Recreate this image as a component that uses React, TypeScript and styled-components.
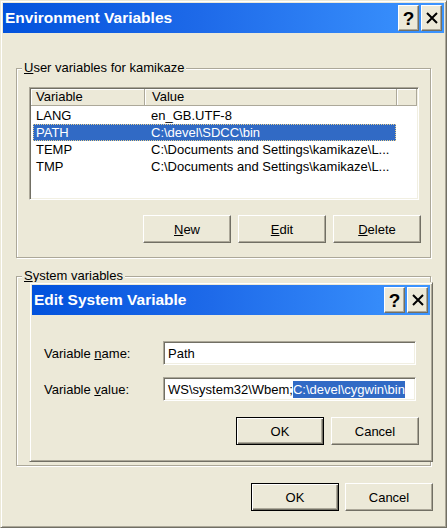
import React from "react";
import styled, { createGlobalStyle, css } from "styled-components";

const GlobalStyle = createGlobalStyle`
  html, body { margin: 0; padding: 0; background: #ece9d8; }
  body { font-family: "Liberation Sans", Arial, sans-serif; font-size: 13px; color: #000; }
  * { box-sizing: border-box; }
`;

const windowFrame = css`
  background: #ece9d8;
  border: 1px solid;
  border-color: #ece9d8 #716f64 #716f64 #ece9d8;
  box-shadow: inset 1px 1px 0 #fff, inset -1px -1px 0 #aca899;
  padding: 2px;
  display: flex;
  flex-direction: column;
`;

const raised = css`
  background: #ece9d8;
  border: 1px solid;
  border-color: #fff #716f64 #716f64 #fff;
  box-shadow: inset -1px -1px 0 #aca899;
`;

const sunken = css`
  background: #fff;
  border: 1px solid;
  border-color: #aca899 #fff #fff #aca899;
  box-shadow: inset 1px 1px 0 #716f64, inset -1px -1px 0 #f1efe2;
`;

const Window = styled.div`
  ${windowFrame}
  position: relative;
  width: 447px;
  height: 528px;
`;

const Dialog = styled.div`
  ${windowFrame}
  position: absolute;
  left: 12px;
  top: 5px;
  width: 404px;
  height: 180px;
  z-index: 2;
`;

const TitleBar = styled.div`
  height: 30px;
  flex: none;
  display: flex;
  align-items: center;
  padding: 0 2px 0 2px;
  background: linear-gradient(to right, #0252dc 0%, #1e6ae9 45%, #3c95ff 100%);
`;

const TitleText = styled.div`
  flex: 1;
  color: #fff;
  font-family: "Liberation Sans", Arial, sans-serif;
  font-weight: bold;
  font-size: 15.5px;
  white-space: nowrap;
`;

const CaptionButtons = styled.div`
  display: flex;
  gap: 2px;
`;

const CaptionButton = styled.div`
  ${raised}
  width: 21px;
  height: 26px;
  display: flex;
  align-items: center;
  justify-content: center;
`;

const HelpGlyph = styled.span`
  font-family: "Liberation Sans", Arial, sans-serif;
  font-weight: bold;
  font-size: 19px;
  line-height: 1;
  color: #000;
  margin-top: 1px;
`;

const WindowBody = styled.div`
  display: flex;
  flex-direction: column;
  padding: 35px 11px 0 13px;
`;

const GroupBox = styled.div<{ $mt?: number }>`
  position: relative;
  width: 415px;
  height: 190px;
  margin-top: ${(p) => p.$mt ?? 0}px;
  border: 1px solid #aca899;
  box-shadow: inset 1px 1px 0 #fff, 1px 1px 0 #fff;
  display: flex;
  flex-direction: column;
  padding: 18px 9px 0 12px;
`;

const GroupLabel = styled.span`
  position: absolute;
  top: -9px;
  left: 5px;
  padding: 0 2px;
  line-height: 15px;
  background: #ece9d8;
  white-space: nowrap;
`;

const ListView = styled.div`
  ${sunken}
  width: 390px;
  height: 113px;
  padding: 1px;
  overflow: hidden;
`;

const ListHeader = styled.div`
  display: flex;
  height: 17px;
`;

const HeaderCell = styled.div<{ $w?: number; $pl: number }>`
  ${(p) => (p.$w ? `width: ${p.$w}px; flex: none;` : `flex: 1;`)}
  height: 17px;
  padding-left: ${(p) => p.$pl}px;
  line-height: 16px;
  background: #ece9d8;
  border-right: 1px solid #aca899;
  border-bottom: 1px solid #aca899;
  box-shadow: inset 1px 1px 0 #fff;
  white-space: nowrap;
`;

const ListRows = styled.div`
  padding-top: 1px;
`;

const Row = styled.div<{ $selected?: boolean }>`
  display: flex;
  width: 363px;
  height: 17px;
  margin-left: 2px;
  line-height: 17px;
  white-space: nowrap;
  ${(p) =>
    p.$selected &&
    css`
      background: #316ac5;
      color: #fff;
      outline: 1px dotted #e7cf8c;
      outline-offset: -1px;
    `}
`;

const Cell = styled.div<{ $w: number; $pl: number }>`
  width: ${(p) => p.$w}px;
  flex: none;
  padding-left: ${(p) => p.$pl}px;
  overflow: hidden;
`;

const ButtonRow = styled.div<{ $gap: number; $mt: number; $pr?: number }>`
  display: flex;
  justify-content: flex-end;
  gap: ${(p) => p.$gap}px;
  margin-top: ${(p) => p.$mt}px;
  padding-right: ${(p) => p.$pr ?? 0}px;
`;

const PushButton = styled.button<{ $default?: boolean }>`
  ${raised}
  width: 88px;
  height: 28px;
  padding: 0;
  font: inherit;
  color: #000;
  ${(p) =>
    p.$default &&
    css`
      border: 1px solid #000;
      box-shadow: inset 1px 1px 0 #fff, inset -1px -1px 0 #716f64, inset -2px -2px 0 #aca899;
    `}
`;

const DialogBody = styled.div`
  display: flex;
  flex-direction: column;
  padding: 26px 11px 0 12px;
`;

const FormGrid = styled.div`
  display: grid;
  grid-template-columns: 119px 253px;
  row-gap: 12px;
  align-items: center;
`;

const FieldLabel = styled.label`
  white-space: nowrap;
`;

const Field = styled.div`
  ${sunken}
  width: 253px;
  height: 24px;
  padding: 0 4px;
  display: flex;
  align-items: center;
  white-space: nowrap;
  overflow: hidden;
`;

const Selected = styled.span`
  background: #316ac5;
  color: #fff;
  line-height: 17px;
`;

const CloseIcon = () => (
  <svg width="12" height="12" viewBox="0 0 12 12">
    <path d="M1 1L11 11M11 1L1 11" stroke="#000" strokeWidth="2" fill="none" />
  </svg>
);

const Caption = ({ title }: { title: string }) => (
  <TitleBar>
    <TitleText>{title}</TitleText>
    <CaptionButtons>
      <CaptionButton aria-label="Help">
        <HelpGlyph>?</HelpGlyph>
      </CaptionButton>
      <CaptionButton aria-label="Close">
        <CloseIcon />
      </CaptionButton>
    </CaptionButtons>
  </TitleBar>
);

const userVars = [
  { name: "LANG", value: "en_GB.UTF-8" },
  { name: "PATH", value: "C:\\devel\\SDCC\\bin", selected: true },
  { name: "TEMP", value: "C:\\Documents and Settings\\kamikaze\\L..." },
  { name: "TMP", value: "C:\\Documents and Settings\\kamikaze\\L..." },
];

export default function App() {
  return (
    <>
      <GlobalStyle />
      <Window>
        <Caption title="Environment Variables" />
        <WindowBody>
          <GroupBox>
            <GroupLabel>
              <u>U</u>ser variables for kamikaze
            </GroupLabel>
            <ListView>
              <ListHeader>
                <HeaderCell $w={114} $pl={5}>Variable</HeaderCell>
                <HeaderCell $w={252} $pl={7}>Value</HeaderCell>
                <HeaderCell $pl={0} />
              </ListHeader>
              <ListRows>
                {userVars.map((v) => (
                  <Row key={v.name} $selected={v.selected}>
                    <Cell $w={111} $pl={3}>{v.name}</Cell>
                    <Cell $w={252} $pl={7}>{v.value}</Cell>
                  </Row>
                ))}
              </ListRows>
            </ListView>
            <ButtonRow $gap={7} $mt={15}>
              <PushButton><u>N</u>ew</PushButton>
              <PushButton><u>E</u>dit</PushButton>
              <PushButton><u>D</u>elete</PushButton>
            </ButtonRow>
          </GroupBox>
          <GroupBox $mt={18}>
            <GroupLabel>
              <u>S</u>ystem variables
            </GroupLabel>
            <Dialog>
              <Caption title="Edit System Variable" />
              <DialogBody>
                <FormGrid>
                  <FieldLabel>
                    Variable <u>n</u>ame:
                  </FieldLabel>
                  <Field>Path</Field>
                  <FieldLabel>
                    Variable <u>v</u>alue:
                  </FieldLabel>
                  <Field>
                    WS\system32\Wbem;<Selected>C:\devel\cygwin\bin</Selected>
                  </Field>
                </FormGrid>
                <ButtonRow $gap={7} $mt={16}>
                  <PushButton $default>OK</PushButton>
                  <PushButton>Cancel</PushButton>
                </ButtonRow>
              </DialogBody>
            </Dialog>
          </GroupBox>
          <ButtonRow $gap={6} $mt={17}>
            <PushButton $default>OK</PushButton>
            <PushButton>Cancel</PushButton>
          </ButtonRow>
        </WindowBody>
      </Window>
    </>
  );
}
